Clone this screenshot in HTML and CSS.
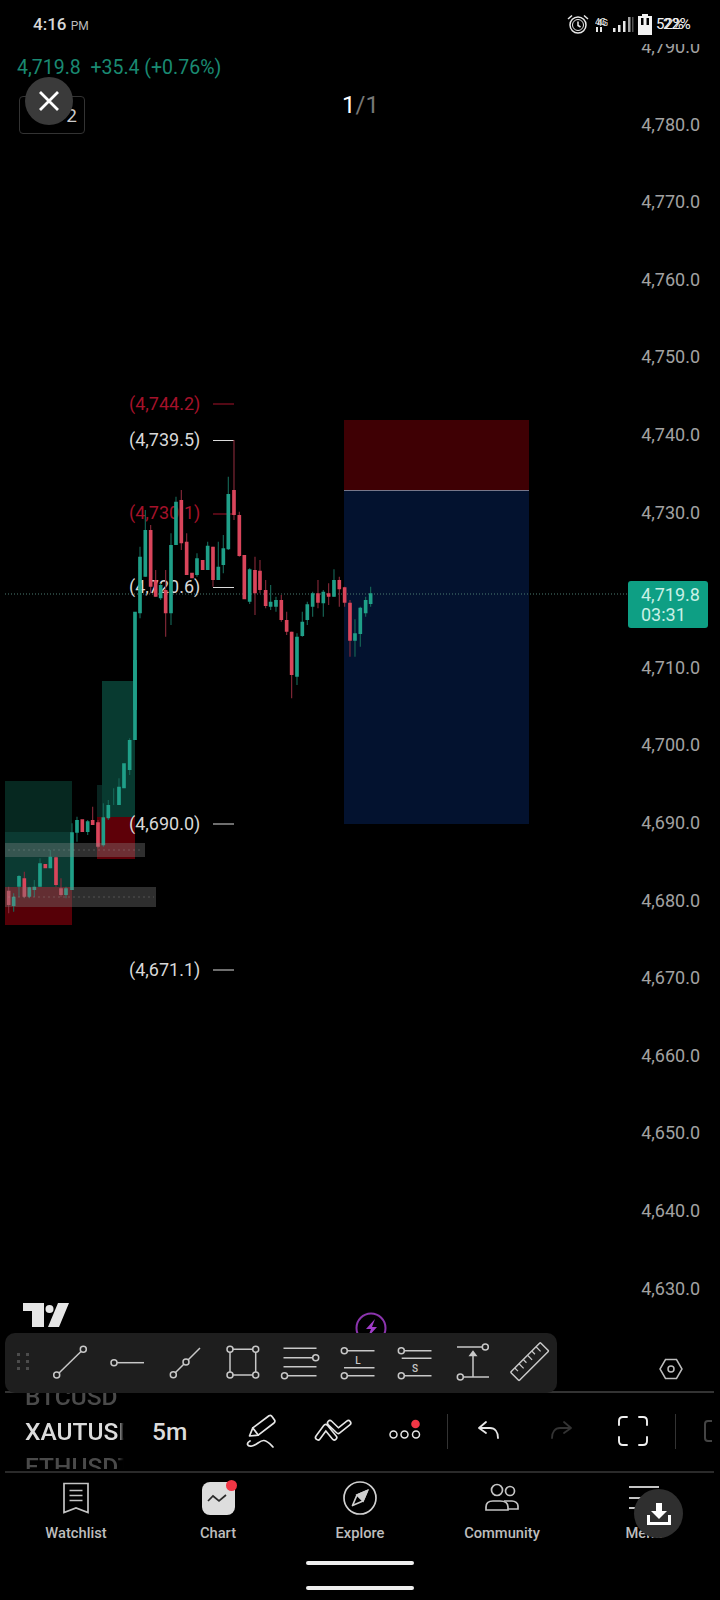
FILE: index.html
```html
<!DOCTYPE html>
<html lang="en">

<head>
    <meta charset="UTF-8">
    <title>XAUTUSD chart</title>
    <link rel="stylesheet" href="styles.css">
</head>

<body>
    <div class="page">
        <!-- Chart: free canvas with the price axis on the right -->
        <div class="chart">
            <svg class="chart-canvas" width="720" height="1333" viewBox="0 0 720 1333">
                <!-- Zones on the left -->
                <rect x="5" y="781" width="67" height="106" fill="#062820" />
                <rect x="5" y="832" width="67" height="55" fill="#0b3a32" />
                <rect x="5" y="887" width="67" height="38" fill="#560007" />
                <rect x="102" y="681" width="33" height="136" fill="#083a30" />
                <rect x="97" y="785" width="5" height="32" fill="#08231f" />
                <rect x="97" y="817" width="38" height="42" fill="#5e0008" />

                <!-- Position -->
                <rect x="344" y="420" width="185" height="70" fill="#3f0004" />
                <rect x="344" y="490" width="185" height="334" fill="#03122f" />
                <line x1="344" y1="490.5" x2="529" y2="490.5" stroke="#77778a" />

                <!-- Level labels -->
                <text class="level level-red" x="129" y="409.5">(4,744.2)</text>
                <text class="level level-white" x="129" y="446">(4,739.5)</text>
                <text class="level level-red" x="129" y="519">(4,730.1)</text>
                <text class="level level-white" x="129" y="593">(4,720.6)</text>
                <text class="level level-white" x="129" y="829.5">(4,690.0)</text>
                <text class="level level-white" x="129" y="975.5">(4,671.1)</text>
                <path d="M213 404H234M213 514H234" stroke="#a5122a" stroke-width="1.1" />
                <path d="M213 440.5H234M213 587.5H234M213 824H234M213 970H234" stroke="#dcdcdc" stroke-width="1.1" />

                <line class="last-line" x1="5" y1="594" x2="628" y2="594" />

                <!-- Candles, main part -->
                <g transform="translate(110 380) scale(.3333)" fill="none">
                    <path class="wick-green" d="M90 500V715M106 390V590M152 610V660M183 460V735M198 350V495M261 520V590M293 485V570M325 485V600M340 465V580M355 290V510M419 565V672M482 615V690M498 650V695M561 760V915M577 695V770M592 665V735M608 635V710M640 630V710M672 568V650M735 718V830M751 680V800M767 650V710M782 620V680" />
                    <path class="wick-red" d="M122 435V640M137 570V650M167 570V770M214 330V510M230 460V585M309 500V620M372 180V420M388 395V530M435 530V705M450 540V640M467 600V685M514 645V725M530 695V765M545 755V955M624 600V685M656 610V675M688 590V680M704 620V680M720 660V830" />
                    <path class="body-green" d="M75 695V990M90 530V700M106 450V590M152 615V655M183 495V700M198 365V495M261 535V585M293 497V570M325 560V600M340 505V555M355 342V508M419 568V665M482 665V680M498 660V680M561 770V890M577 725V768M592 673V720M608 640V680M640 635V670M672 600V650M735 760V782M751 683V762M767 660V700M782 640V672" />
                    <path class="body-red" d="M122 450V620M137 600V650M167 630V700M214 360V490M230 485V585M246 578V595M278 540V570M309 500V600M372 330V405M388 405V528M403 525V658M435 570V640M450 572V630M467 630V678M514 660V720M530 720V755M545 755V885M624 640V668M656 640V650M688 600V628M704 622V668M720 668V782" />
                </g>

                <!-- Candles, left part -->
                <g transform="translate(0 660) scale(.3333)" fill="none">
                    <path class="wick-green" d="M389 235V345M357 355V435M341 385V435M325 420V480M310 430V560M263 480V525M231 470V545M216 490V690M198 680V715M151 570V625M120 595V680M103 660V710M88 680V715M57 645V710M41 700V755" />
                    <path class="wick-red" d="M294 480V565M278 440V495M183 655V710M168 590V680M73 635V715M26 680V760" />
                    <path class="body-green" d="M405 0V240M389 240V330M372 310V385M357 380V435M325 435V475M310 472V556M263 484V516M231 480V518M216 517V690M198 685V705M151 590V625M120 610V680M103 680V690M88 682V710M57 648V680M41 710V738" />
                    <path class="body-red" d="M294 487V560M278 480V495M247 478V516M183 685V705M168 592V675M136 612V625M73 655V710M26 692V735" />
                </g>

                <!-- Grey bands over the candles -->
                <rect x="5" y="843" width="140" height="14" fill="#8a8a8a" fill-opacity=".34" />
                <rect x="5" y="887" width="151" height="20" fill="#7a7a7a" fill-opacity=".38" />
                <path d="M8 850H143M8 897H154" stroke="#a8a8a8" stroke-opacity=".3" stroke-dasharray="2 3" />

                <!-- TradingView logo -->
                <path d="M23 1303H44V1327H32V1311H23Z M58 1303H69L59 1327H48Z" fill="#e6e6e6" />
                <circle cx="49.500" cy="1309" r="4" fill="#e6e6e6" />

                <!-- Flash button, cut by the toolbar -->
                <circle cx="371" cy="1328" r="14.500" fill="none" stroke="#8b34ad" stroke-width="2" />
                <path d="M375 1319L366 1329H371L368 1337L377 1327H372Z" fill="#a03cc8" />
            </svg>

            <div class="price-axis">
                <span class="price">4,790.0</span>
                <span class="price">4,780.0</span>
                <span class="price">4,770.0</span>
                <span class="price">4,760.0</span>
                <span class="price">4,750.0</span>
                <span class="price">4,740.0</span>
                <span class="price">4,730.0</span>
                <span class="price"></span>
                <span class="price">4,710.0</span>
                <span class="price">4,700.0</span>
                <span class="price">4,690.0</span>
                <span class="price">4,680.0</span>
                <span class="price">4,670.0</span>
                <span class="price">4,660.0</span>
                <span class="price">4,650.0</span>
                <span class="price">4,640.0</span>
                <span class="price">4,630.0</span>
            </div>

            <div class="price-tag">
                <span>4,719.8</span>
                <span>03:31</span>
            </div>

            <!-- Status bar and ticker -->
            <div class="header">
                <div class="status-bar">
                    <div class="clock">4:16 <small>PM</small></div>
                    <div class="status-icons">
                        <svg class="alarm" width="24" height="22" viewBox="0 0 24 22" fill="none" stroke="#e8e8e8" stroke-width="1.500">
                            <circle cx="12" cy="12" r="8" />
                            <circle cx="12" cy="12" r="5.500" stroke-width="1" />
                            <path d="M12 8.500V12.500L14.500 14M2 6L6 2.500M22 6L18 2.500" />
                        </svg>
                        <svg class="network" width="16" height="22" viewBox="0 0 16 22">
                            <text class="net" x="0" y="12">4G</text>
                            <text class="net" x="2" y="13">4G</text>
                            <rect x="1" y="14" width="2" height="5" fill="#e8e8e8" />
                            <rect x="5" y="14" width="2" height="5" fill="#e8e8e8" />
                        </svg>
                        <svg width="22" height="22" viewBox="0 0 22 22" fill="#e8e8e8">
                            <rect x="1" y="15" width="2.500" height="4" />
                            <rect x="6" y="12" width="2.500" height="7" />
                            <rect x="11" y="8" width="2.500" height="11" />
                            <rect x="16" y="4" width="2.500" height="15" opacity=".7" />
                            <rect x="20" y="4" width="1.500" height="15" opacity=".35" />
                        </svg>
                        <svg width="16" height="22" viewBox="0 0 16 22">
                            <path d="M1 3H5V1H11V3H15V22H1Z" fill="#f2f2f2" />
                            <rect x="4" y="5" width="2.500" height="7" fill="#000" />
                            <rect x="9.500" y="5" width="2.500" height="7" fill="#000" />
                        </svg>
                        <div class="battery-text"><span>52%</span><span class="ghost">22%</span></div>
                    </div>
                </div>
                <div class="ticker">4,719.8&nbsp; +35.4 (+0.76%)</div>
                <div class="layout-box">2</div>
            </div>

            <div class="close-btn">
                <svg width="20" height="20" viewBox="0 0 20 20" stroke="#fff" stroke-width="2.800">
                    <path d="M1 1L19 19M19 1L1 19" />
                </svg>
            </div>
            <div class="counter">1<span>/1</span></div>
        </div>

        <!-- Drawing tools -->
        <div class="tool-row">
            <div class="toolbar">
                <svg class="grip" width="14" height="20" viewBox="0 0 14 20" fill="#4c4c4c">
                    <rect x="0" y="1" width="3" height="3" />
                    <rect x="9" y="1" width="3" height="3" />
                    <rect x="0" y="8" width="3" height="3" />
                    <rect x="9" y="8" width="3" height="3" />
                    <rect x="0" y="15" width="3" height="3" />
                    <rect x="9" y="15" width="3" height="3" />
                </svg>
                <svg class="tool" viewBox="0 0 40 40">
                    <circle cx="6.700" cy="33" r="3" />
                    <circle cx="33.300" cy="7.300" r="3" />
                    <path d="M9 31L31 9.500" />
                </svg>
                <svg class="tool" viewBox="0 0 40 40">
                    <circle cx="6" cy="20.700" r="3" />
                    <path d="M9 20.700H36" />
                </svg>
                <svg class="tool" viewBox="0 0 40 40">
                    <circle cx="8.300" cy="32.700" r="3" />
                    <circle cx="21" cy="20" r="3" />
                    <path d="M10.500 30.500L19 22M23 18L35 6" />
                </svg>
                <svg class="tool" viewBox="0 0 40 40">
                    <circle cx="7" cy="7.300" r="3" />
                    <circle cx="32.700" cy="7.300" r="3" />
                    <circle cx="7" cy="33" r="3" />
                    <circle cx="32.700" cy="33" r="3" />
                    <path d="M10 7.300H29.700M10 33H29.700M7 10.300V30M32.700 10.300V30" />
                </svg>
                <svg class="tool" viewBox="0 0 40 40">
                    <circle cx="35.700" cy="15.700" r="3" />
                    <circle cx="4.500" cy="33.700" r="3" />
                    <path d="M3.500 6.300H36.500M3.500 15.700H32.700M3.500 24.700H36.500M7.500 33.700H36.500" />
                </svg>
                <svg class="tool" viewBox="0 0 40 40">
                    <circle cx="6.300" cy="8.700" r="3" />
                    <circle cx="6.300" cy="33.700" r="3" />
                    <path d="M9.300 8.700H36.500M6 25.700H36.500M9.300 33.700H36.500" />
                    <text class="tool-letter" x="20" y="21.500">L</text>
                </svg>
                <svg class="tool" viewBox="0 0 40 40">
                    <circle cx="6.300" cy="8.700" r="3" />
                    <circle cx="6.300" cy="33.700" r="3" />
                    <path d="M9.300 8.700H36.500M6.700 16.300H36.500M9.300 33.700H36.500" />
                    <text class="tool-letter" x="20" y="29.500">S</text>
                </svg>
                <svg class="tool" viewBox="0 0 40 40">
                    <circle cx="32.300" cy="5" r="3" />
                    <circle cx="7.300" cy="35" r="3" />
                    <path d="M4 5H29.300M10.300 35H36M20 12V35" />
                    <path d="M17 13.500L20 9.500L23 13.500Z" fill="#c8c8c8" />
                </svg>
                <svg class="tool" viewBox="0 0 40 40">
                    <g transform="rotate(-45 20 20)">
                        <rect x="-1" y="13.500" width="42" height="12" rx="1" />
                        <path d="M5 13.500V18M11 13.500V20M17 13.500V18M23 13.500V20M29 13.500V18M35 13.500V20" stroke-width="1.200" />
                    </g>
                </svg>
            </div>
            <svg class="hex" width="26" height="26" viewBox="0 0 26 26" fill="none" stroke="#bdbdbd" stroke-width="1.500">
                <path d="M7.500 3.500H18.500L24 13L18.500 22.500H7.500L2 13Z" />
                <circle cx="13" cy="13" r="3" />
            </svg>
        </div>

        <!-- Symbol, interval and chart actions -->
        <div class="symbol-row">
            <div class="symbol-picker">
                <span class="symbol symbol-dim">BTCUSD</span>
                <span class="symbol">XAUTUSD</span>
                <span class="symbol symbol-dim">ETHUSDT</span>
            </div>
            <div class="interval">5m</div>
            <div class="action">
                <svg width="36" height="36" viewBox="0 0 36 36" fill="none" stroke="#e6e6e6" stroke-width="1.700" stroke-linejoin="round" stroke-linecap="round">
                    <path d="M6.500 23L9.800 14.900L26 2.800Q28 1.800 29 3.500L31.500 7Q32.500 8.500 31 10L15.200 22.100Z" />
                    <path d="M9.800 14.900L15.200 22.100" />
                    <path d="M7 28C3 30 4 34 9 33C14 32 17 27 21 27.500C25 28 28 32 30 34" />
                </svg>
            </div>
            <div class="action">
                <svg class="wave" width="38" height="24" viewBox="0 0 38 24" fill="none" stroke-linejoin="round" stroke-linecap="round">
                    <path d="M4 18.500L11.700 8L20.300 18.500M16 4L24.300 12L34.300 4" stroke="#e6e6e6" stroke-width="6.500" />
                    <path d="M4 18.500L11.700 8L20.300 18.500M16 4L24.300 12L34.300 4" stroke="#000" stroke-width="3.300" />
                </svg>
            </div>
            <div class="action action-dots">
                <svg width="38" height="26" viewBox="0 0 38 26" fill="none" stroke="#e6e6e6" stroke-width="1.500">
                    <circle cx="7.500" cy="16.500" r="3.500" />
                    <circle cx="18.500" cy="16.500" r="3.500" />
                    <circle cx="30" cy="16.500" r="3.500" />
                    <circle cx="29.500" cy="6" r="4.300" fill="#f23645" stroke="none" />
                </svg>
            </div>
            <div class="separator"></div>
            <div class="action">
                <svg width="24" height="22" viewBox="0 0 24 22" fill="none" stroke="#e6e6e6" stroke-width="1.800" stroke-linecap="round" stroke-linejoin="round">
                    <path d="M9 2L2 8L9 13M2 8H13C18 8 21 12 21 18" />
                </svg>
            </div>
            <div class="action">
                <svg width="24" height="22" viewBox="0 0 24 22" fill="none" stroke="#333" stroke-width="1.800" stroke-linecap="round" stroke-linejoin="round">
                    <path d="M15 2L22 8L15 13M22 8H11C6 8 3 12 3 18" />
                </svg>
            </div>
            <div class="action">
                <svg width="32" height="32" viewBox="0 0 32 32" fill="none" stroke="#f0f0f0" stroke-width="1.900" stroke-linecap="round">
                    <path d="M10 2H6Q2 2 2 6V10M22 2H26Q30 2 30 6V10M10 30H6Q2 30 2 26V22M22 30H26Q30 30 30 26V22" />
                </svg>
            </div>
            <div class="separator"></div>
            <svg class="cut-icon" width="12" height="24" viewBox="0 0 12 24" fill="none" stroke="#444" stroke-width="2">
                <path d="M10 2H6Q3 2 3 5V19Q3 22 6 22H10" />
            </svg>
        </div>

        <!-- Bottom navigation -->
        <nav class="nav">
            <div class="nav-item">
                <svg width="36" height="36" viewBox="0 0 36 36" fill="none" stroke="#c4c4c4" stroke-width="1.700">
                    <path d="M6 3.500H30V32.500L18 28L6 32.500Z" />
                    <path d="M11.500 10.500H24.500M11.500 15.500H24.500M11.500 20.500H24.500" />
                </svg>
                <span>Watchlist</span>
            </div>
            <div class="nav-item">
                <div class="chart-badge">
                    <svg width="22" height="14" viewBox="0 0 22 14" fill="none" stroke="#2a2a2a" stroke-width="1.700">
                        <path d="M1 9L6 4L12 9L19 3" />
                    </svg>
                    <i class="red-dot"></i>
                </div>
                <span>Chart</span>
            </div>
            <div class="nav-item">
                <svg width="36" height="36" viewBox="0 0 36 36" fill="none" stroke="#d0d0d0" stroke-width="1.700">
                    <circle cx="18" cy="18" r="16" />
                    <path d="M25.500 10.500L21 21L10.500 25.500L15 15Z" stroke-linejoin="round" />
                    <path d="M25.500 10.500L15 15L21 21Z" fill="#d0d0d0" />
                </svg>
                <span>Explore</span>
            </div>
            <div class="nav-item">
                <svg width="36" height="36" viewBox="0 0 36 36" fill="none" stroke="#c4c4c4" stroke-width="1.700">
                    <circle cx="13" cy="10" r="5.500" />
                    <circle cx="26" cy="11" r="4.500" />
                    <path d="M2 30V27C2 23 5 21 9 21H16C21 21 24 23 24 27V30Z" />
                    <path d="M24 29H34V26C34 23 31 21 28 21H20" />
                </svg>
                <span>Community</span>
            </div>
            <div class="nav-item">
                <svg width="36" height="36" viewBox="0 0 36 36" fill="none" stroke="#c4c4c4" stroke-width="1.900">
                    <path d="M3 7H33M3 18H26M3 28H20" />
                </svg>
                <span>Menu</span>
            </div>
        </nav>

        <div class="home-bars">
            <div class="home-bar"></div>
            <div class="home-bar"></div>
        </div>

        <!-- Floating download button -->
        <div class="download-btn">
            <svg width="24" height="24" viewBox="0 0 24 24" fill="#fff">
                <path d="M9 1H15V9H20L12 17L4 9H9Z" />
                <path d="M0 13H3V20H21V13H24V23H0Z" />
            </svg>
        </div>
    </div>
</body>

</html>
```

FILE: styles.css
```css
/* Page */
body {
    margin: 0;
    background-color: #000;
    font-family: 'Roboto', sans-serif;
    color: #ddd;
}

.page {
    position: relative;
    display: flex;
    flex-direction: column;
    width: 720px;
    height: 1600px;
    overflow: hidden;
    background-color: #000;
}

/* Chart */
.chart {
    position: relative;
    flex: none;
    height: 1333px;
    overflow: hidden;
}

.chart-canvas {
    position: absolute;
    top: 0;
    left: 0;
}

.level {
    font-size: 18px;
}

.level-red {
    fill: #a5122a;
}

.level-white {
    fill: #d8d8d8;
}

.last-line {
    stroke: #4d7d72;
    stroke-width: 1;
    stroke-dasharray: 1 2;
}

.wick-green {
    stroke: #156656;
    stroke-width: 3.4;
}

.wick-red {
    stroke: #842838;
    stroke-width: 3.4;
}

.body-green {
    stroke: #1f9f88;
    stroke-width: 11;
}

.body-red {
    stroke: #d9455b;
    stroke-width: 11;
}

.price-axis {
    position: absolute;
    top: 8px;
    right: 20px;
    display: flex;
    flex-direction: column;
    align-items: flex-end;
}

.price {
    height: 77.6px;
    line-height: 77.6px;
    font-size: 18px;
    color: #a2a2a2;
}

.price-tag {
    position: absolute;
    top: 581px;
    left: 628px;
    display: flex;
    flex-direction: column;
    justify-content: center;
    box-sizing: border-box;
    width: 80px;
    height: 47px;
    padding-left: 13px;
    background-color: #0e9f84;
    border-radius: 3px;
    font-size: 18px;
    line-height: 20px;
    color: #c9f0e6;
}

/* Header */
.header {
    position: relative;
}

.status-bar {
    display: flex;
    justify-content: space-between;
    align-items: center;
    box-sizing: border-box;
    height: 44px;
    padding: 4px 28px 0 33px;
    background-color: #000;
}

.clock {
    font-size: 17px;
    font-weight: 500;
    color: #d8d8d8;
}

.clock small {
    font-size: 12px;
    font-weight: 400;
    color: #bbb;
}

.status-icons {
    display: flex;
    align-items: center;
    gap: 3px;
}

.alarm {
    margin-right: 2px;
}

.network {
    margin-right: -2px;
}

.net {
    font-size: 9px;
    fill: #e8e8e8;
}

.battery-text {
    position: relative;
    width: 36px;
    font-size: 15px;
    color: #f2f2f2;
}

.battery-text .ghost {
    position: absolute;
    top: 0;
    left: 7px;
}

.ticker {
    margin: 13px 0 0 17px;
    font-size: 19.5px;
    line-height: 22px;
    color: #1a8a72;
}

.layout-box {
    display: flex;
    justify-content: flex-end;
    align-items: center;
    box-sizing: border-box;
    width: 66px;
    height: 38px;
    margin: 17px 0 0 19px;
    padding-right: 7px;
    border: 1px solid #333;
    border-radius: 4px;
    font-size: 19px;
    color: #ccc;
}

.close-btn {
    position: absolute;
    top: 77px;
    left: 25px;
    display: flex;
    justify-content: center;
    align-items: center;
    width: 48px;
    height: 48px;
    background-color: #3a3a3a;
    border-radius: 50%;
}

.counter {
    position: absolute;
    top: 91px;
    left: 342px;
    font-size: 24px;
    line-height: 28px;
    color: #fff;
}

.counter span {
    color: #777;
}

/* Drawing tools */
.tool-row {
    display: flex;
    justify-content: space-between;
    align-items: center;
    flex: none;
    height: 58px;
    margin: 0 6px 0 5px;
    padding-right: 30px;
    border-bottom: 2px solid #333;
}

.toolbar {
    display: flex;
    align-items: center;
    gap: 17.5px;
    box-sizing: border-box;
    width: 552px;
    height: 60px;
    margin-bottom: -2px;
    padding: 0 0 2px 12px;
    background-color: #1e1e1e;
    border-radius: 10px;
}

.grip {
    margin-right: 1.5px;
}

.tool {
    width: 40px;
    height: 40px;
    flex: none;
    fill: none;
    stroke: #c8c8c8;
    stroke-width: 1.5;
}

.tool-letter {
    font-size: 10px;
    font-weight: 500;
    fill: #c8c8c8;
    stroke: none;
    text-anchor: middle;
}

.hex {
    margin-top: 14px;
}

/* Symbol row */
.symbol-row {
    display: flex;
    align-items: center;
    flex: none;
    box-sizing: border-box;
    height: 80px;
    margin: 0 6px 0 5px;
    padding-bottom: 2px;
    border-bottom: 2px solid #2a2a2a;
}

.symbol-picker {
    display: flex;
    flex-direction: column;
    flex: none;
    box-sizing: border-box;
    width: 120px;
    height: 76px;
    justify-content: center;
    padding-left: 20px;
    overflow: hidden;
    white-space: nowrap;
    -webkit-mask-image: linear-gradient(to right, #000 94%, transparent 99%);
    mask-image: linear-gradient(to right, #000 94%, transparent 99%);
}

.symbol {
    flex: none;
    height: 35px;
    line-height: 35px;
    font-size: 24.5px;
    font-weight: 500;
    color: #dcdcdc;
}

.symbol-dim {
    color: #4a4a4a;
}

.interval {
    flex: none;
    box-sizing: border-box;
    width: 100px;
    padding-left: 27px;
    font-size: 24.5px;
    font-weight: 500;
    color: #dcdcdc;
}

.action {
    display: flex;
    justify-content: center;
    align-items: center;
    flex: none;
    width: 72px;
}

.separator {
    flex: none;
    width: 1px;
    height: 35px;
    margin: 0 5.5px;
    background-color: #333;
}

.cut-icon {
    margin-left: 21px;
}

/* Bottom navigation */
.nav {
    display: flex;
    flex: none;
    padding: 7px 5px 0;
}

.nav-item {
    display: flex;
    flex-direction: column;
    align-items: center;
    flex: 1;
    gap: 8px;
    font-size: 14.7px;
    font-weight: 500;
    line-height: 18px;
    color: #bdbdbd;
}

.chart-badge {
    position: relative;
    display: flex;
    justify-content: center;
    align-items: center;
    width: 33px;
    height: 33px;
    margin: 2px 0 1px;
    background-color: #ddd;
    border-radius: 8px;
}

.red-dot {
    position: absolute;
    top: -2px;
    right: -2px;
    width: 11px;
    height: 11px;
    background-color: #f23645;
    border-radius: 50%;
}

.home-bars {
    display: flex;
    flex-direction: column;
    align-items: center;
    gap: 21px;
    margin-top: 19px;
}

.home-bar {
    width: 108px;
    height: 4px;
    background-color: #eee;
    border-radius: 2px;
}

.download-btn {
    position: absolute;
    top: 1489px;
    left: 634px;
    display: flex;
    justify-content: center;
    align-items: center;
    width: 49px;
    height: 49px;
    background-color: #2f2f2f;
    border-radius: 50%;
}
```
